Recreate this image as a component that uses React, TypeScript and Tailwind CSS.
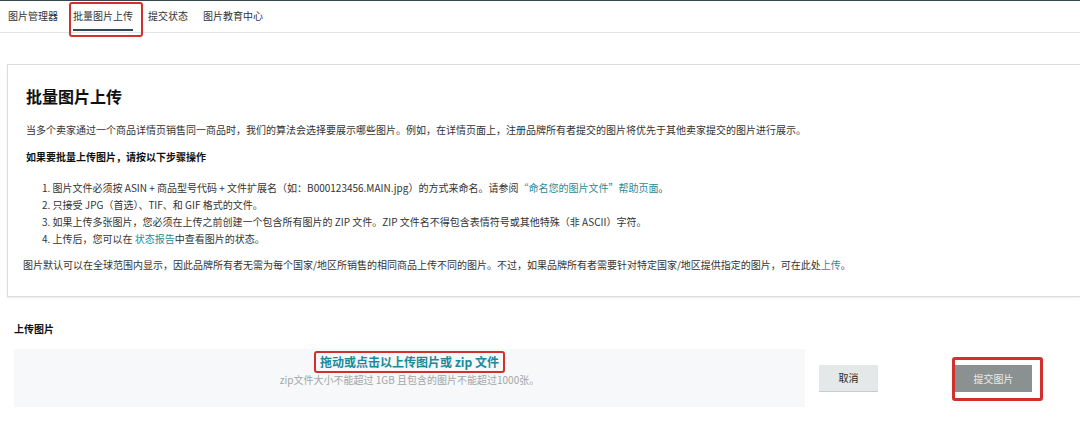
import React from 'react'

const font = { fontFamily: '"Noto Sans CJK SC", "Noto Sans", sans-serif' }

const tabs = ['图片管理器', '批量图片上传', '提交状态', '图片教育中心']

export default function App() {
  return (
    <div
      className="relative h-[445px] w-[1080px] overflow-hidden bg-white text-[#333]"
      style={font}
    >
      {/* top edge */}
      <div className="h-px bg-[#37474f]" />

      {/* Tabs */}
      <div className="flex h-[32px] items-stretch gap-[15px] border-b border-[#e3e3e3] pl-[8px]">
        {tabs.map((t, i) => (
          <div key={t} className="relative flex items-center text-[10px] leading-[14px]">
            <span className="relative -top-[1px]">{t}</span>
            {i === 1 && (
              <>
                <span className="absolute bottom-[1px] left-0 right-0 h-[2px] bg-[#2f4b5a]" />
                <span className="absolute -left-[4px] -right-[10px] top-[1px] -bottom-[5px] rounded-[3px] border-[2px] border-[#d2302c]" />
              </>
            )}
          </div>
        ))}
      </div>

      {/* Info panel */}
      <section className="ml-[7px] mt-[31px] border-y border-l border-[#dcdcdc] pb-[23px] pl-[18px] shadow-[0_1px_2px_rgba(0,0,0,0.08)]">
        <h1 className="mt-[20px] text-[16px] font-bold leading-[22px] text-[#0f1111]">批量图片上传</h1>
        <p className="mt-[15px] text-[10px] leading-[16px]">
          当多个卖家通过一个商品详情页销售同一商品时，我们的算法会选择要展示哪些图片。例如，在详情页面上，注册品牌所有者提交的图片将优先于其他卖家提交的图片进行展示。
        </p>
        <p className="mt-[11px] text-[10px] font-bold leading-[16px] text-[#0f1111]">
          如果要批量上传图片，请按以下步骤操作
        </p>
        <ol className="mt-[14px] pl-[16px] text-[10px] leading-[17px]">
          <li>
            1. 图片文件必须按 ASIN + 商品型号代码 + 文件扩展名（如：B000123456.MAIN.jpg）的方式来命名。请参阅
            <span className="text-[#2a8a96]">“命名您的图片文件”帮助页面</span>。
          </li>
          <li>2. 只接受 JPG（首选）、TIF、和 GIF 格式的文件。</li>
          <li>3. 如果上传多张图片，您必须在上传之前创建一个包含所有图片的 ZIP 文件。ZIP 文件名不得包含表情符号或其他特殊（非 ASCII）字符。</li>
          <li>
            4. 上传后，您可以在 <span className="text-[#2a8a96]">状态报告</span>中查看图片的状态。
          </li>
        </ol>
        <p className="-ml-[3px] mt-[10px] text-[10px] leading-[16px]">
          图片默认可以在全球范围内显示，因此品牌所有者无需为每个国家/地区所销售的相同商品上传不同的图片。不过，如果品牌所有者需要针对特定国家/地区提供指定的图片，可在此处
          <span className="text-[#2a8a96]">上传</span>。
        </p>
      </section>

      {/* Upload */}
      <h2 className="ml-[14px] mt-[24px] text-[10px] font-bold leading-[16px] text-[#0f1111]">上传图片</h2>
      <div className="mt-[12px] flex items-center pl-[14px]">
        <div className="flex h-[58px] w-[791px] flex-col items-center bg-[#f6f8f9] pt-[6px]">
          <span className="relative text-[12px] font-bold leading-[14px] text-[#1a8a9a]">
            拖动或点击以上传图片或 zip 文件
            <span className="absolute -left-[6px] -right-[6px] -top-[4px] -bottom-[4px] rounded-[3px] border-[2px] border-[#d2302c]" />
          </span>
          <span className="mt-[4px] text-[10px] leading-[14px] text-[#a3a6a8]">
            zip文件大小不能超过 1GB 且包含的图片不能超过1000张。
          </span>
        </div>
        <button className="ml-[14px] flex h-[27px] w-[59px] items-center justify-center border-b border-[#c9cccc] bg-[#e4e8e9] text-[10px] text-[#1d2b2b]">
          取消
        </button>
        <button className="relative ml-[77px] flex h-[27px] w-[77px] items-center justify-center bg-[#8b9090] text-[10px] text-[#e9ecec]">
          提交图片
          <span className="absolute -left-[3px] -right-[11px] -top-[8px] -bottom-[9px] rounded-[3px] border-[3px] border-[#d2302c]" />
        </button>
      </div>
    </div>
  )
}
